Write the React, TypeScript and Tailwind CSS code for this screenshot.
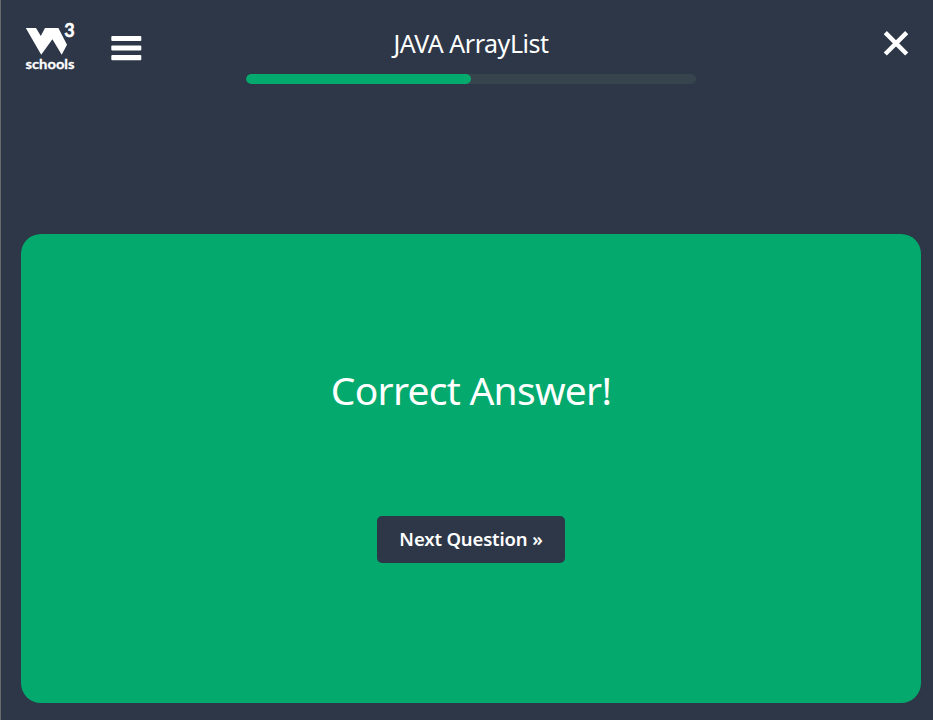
import React from "react";

function Logo() {
  return (
    <svg width="54" height="50" viewBox="24 22 54 50" className="block overflow-visible" aria-label="W3Schools">
      <path fill="#fff" d="M25.8 27.9H36L40.8 36L45 27.9H58.4L67 44.8L61.7 54.8L52.4 39.2L41.2 54.8Z" />
      <text x="64.2" y="37.3" fill="#fff" stroke="#fff" strokeWidth="0.5" className="font-[family-name:Lato] text-[18px] font-bold">3</text>
      <text x="25.5" y="69" textLength="49" lengthAdjust="spacingAndGlyphs" fill="#fff" stroke="#fff" strokeWidth="0.3" className="font-[family-name:Lato] text-[14px] font-bold">schools</text>
    </svg>
  );
}

export default function App() {
  return (
    <div className="flex h-[720px] w-[933px] flex-col overflow-hidden border-l border-[#6b6b6b] bg-[#2d3748] pl-5 pr-3 pb-[17px] text-white">
      <header className="flex h-[234px] items-start justify-between">
        <div className="flex w-[225px] pl-[3px] pt-[22px]">
          <Logo />
          <button className="ml-[33px] mt-[13px] h-[26px]" aria-label="Menu">
            <svg width="31" height="26" viewBox="0 0 31 26" fill="#fff" className="block">
              <rect x="0.3" y="1" width="30" height="5" rx="1" />
              <rect x="0.3" y="10.5" width="30" height="5" rx="1" />
              <rect x="0.3" y="20" width="30" height="5.3" rx="1" />
            </svg>
          </button>
        </div>
        <div className="w-[450px] pt-[23px]">
          <h1 className="h-[51px] text-center font-['Noto_Sans',sans-serif] text-[25px] leading-[40px] tracking-[-0.47px]">JAVA ArrayList</h1>
          <div className="h-[10px] overflow-hidden rounded-full bg-[#38444d]">
            <div className="h-full w-1/2 rounded-full bg-[#04aa6d]" />
          </div>
        </div>
        <div className="flex w-[225px] justify-end pr-3 pt-[30px]">
          <button aria-label="Close">
            <svg width="26" height="26" viewBox="0 0 26 26" stroke="#fff" strokeWidth="4.4">
              <path d="M2.3 2.6L23.7 24M23.7 2.6L2.3 24" />
            </svg>
          </button>
        </div>
      </header>
      <main className="flex flex-1 flex-col items-center rounded-[20px] bg-[#04aa6d] pt-[126px]">
        <h2 className="h-[156px] font-['Noto_Sans',sans-serif] text-[39px] leading-[60px] tracking-[-0.75px]">Correct Answer!</h2>
        <button className="h-[47px] w-[188px] rounded-[5px] bg-[#2d3748] pb-0.5 font-['Noto_Sans',sans-serif] text-[18.5px] font-semibold tracking-[-0.15px] whitespace-nowrap">Next Question »</button>
      </main>
    </div>
  );
}
